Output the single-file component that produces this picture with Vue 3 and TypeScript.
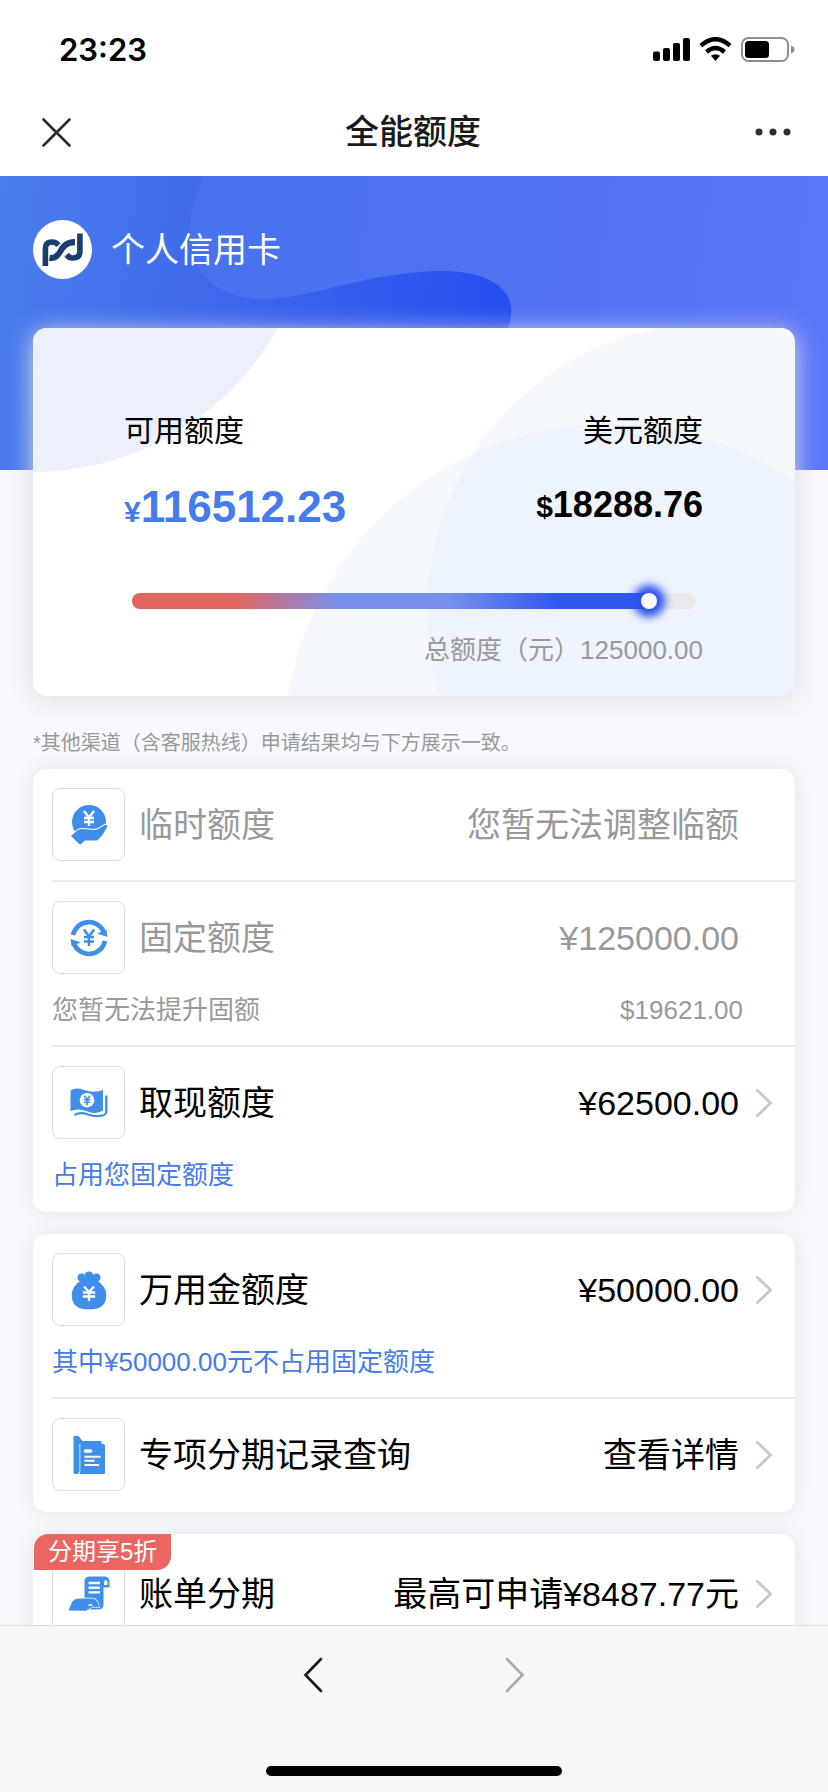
<script setup lang="ts">
import { computed } from 'vue'

type IconName = 'hand' | 'cycle' | 'cash' | 'bag' | 'folder' | 'scroll'

interface Row {
  icon: IconName
  title: string
  value: string
  note?: string
  extra?: string
  link?: boolean
  tag?: string
}

const groups: Row[][] = [
  [
    { icon: 'hand', title: '临时额度', value: '您暂无法调整临额' },
    { icon: 'cycle', title: '固定额度', value: '¥125000.00', note: '您暂无法提升固额', extra: '$19621.00' },
    { icon: 'cash', title: '取现额度', value: '¥62500.00', note: '占用您固定额度', link: true },
  ],
  [
    { icon: 'bag', title: '万用金额度', value: '¥50000.00', note: '其中¥50000.00元不占用固定额度', link: true },
    { icon: 'folder', title: '专项分期记录查询', value: '查看详情', link: true },
  ],
  [{ icon: 'scroll', title: '账单分期', value: '最高可申请¥8487.77元', link: true, tag: '分期享5折' }],
]

const percent = 92
const fillStyle = computed(() => ({ width: `${percent}%` }))
</script>

<template>
  <div class="page">
    <header class="top">
      <div class="status">
        <span class="clock">23:23</span>
        <svg class="signals" width="142" height="26" viewBox="0 0 142 26" aria-hidden="true">
          <rect x="0" y="14.500" width="7" height="9.500" rx="2" />
          <rect x="10" y="11" width="7" height="13" rx="2" />
          <rect x="20" y="6" width="7" height="18" rx="2" />
          <rect x="30" y="1" width="7" height="23" rx="2" />
          <g fill="none" stroke="#000" stroke-width="4.400">
            <path d="M48 8.600Q62.500 -4.200 77 8.600" />
            <path d="M53.500 15Q62.500 7 71.500 15" />
          </g>
          <path d="M58 18.800Q62.500 15.500 67 18.800L62.500 24Z" />
          <rect x="89" y="1" width="46" height="23" rx="6.500" fill="none" stroke="#8e8e8e" stroke-width="2" />
          <rect x="92" y="4" width="24" height="17" rx="3.500" />
          <path d="M138 8.500Q141.500 10 141.500 12.500T138 16.500Z" fill="#8e8e8e" />
        </svg>
      </div>
      <div class="titlebar">
        <button class="iconbtn" aria-label="关闭">
          <svg width="29" height="29" viewBox="0 0 29 29"><path d="M1.500 1.500L27.500 27.500M27.500 1.500L1.500 27.500" stroke="#2b2b2b" stroke-width="2.600" stroke-linecap="round" /></svg>
        </button>
        <h1>全能额度</h1>
        <button class="iconbtn" aria-label="更多">
          <svg width="36" height="8" viewBox="0 0 36 8" fill="#303030"><circle cx="4" cy="4" r="3.500" /><circle cx="18" cy="4" r="3.500" /><circle cx="32" cy="4" r="3.500" /></svg>
        </button>
      </div>
    </header>

    <main class="content">
      <section class="hero">
        <svg class="hero-bg" viewBox="0 0 828 294" preserveAspectRatio="none" aria-hidden="true">
          <defs>
            <linearGradient id="base" gradientUnits="userSpaceOnUse" x1="0" y1="0" x2="512" y2="60">
              <stop offset="0" stop-color="#4a7eec" />
              <stop offset=".4" stop-color="#406bec" />
              <stop offset="1" stop-color="#264ef0" />
            </linearGradient>
            <linearGradient id="wave" gradientUnits="userSpaceOnUse" x1="180" y1="60" x2="828" y2="150">
              <stop offset="0" stop-color="#4872ee" />
              <stop offset=".55" stop-color="#5073f3" />
              <stop offset="1" stop-color="#5c77f8" />
            </linearGradient>
          </defs>
          <rect width="828" height="294" fill="url(#base)" />
          <path d="M205 0C178 45 180 122 264 123C310 123 370 95 443 95C496 95 524 120 506 156L470 294H828V0Z" fill="url(#wave)" />
        </svg>
        <div class="owner">
          <svg width="59" height="59" viewBox="0 0 59 59" aria-hidden="true">
            <circle cx="29.500" cy="29.500" r="29.500" fill="#fff" />
            <g fill="none" stroke="#1a3d6e">
              <path d="M12.400 46V28.500Q12.400 22 19 22Q23.500 22 25.500 25.500" stroke-width="5.600" />
              <path d="M16.500 37.800C29 40 25 22 42 22.200" stroke-width="6.200" />
              <path d="M46.900 13.500V31.500Q46.900 38 40 38Q35.500 38 33.500 34.500" stroke-width="5.600" />
            </g>
            <path d="M26.800 23.500Q25.500 29 22.800 32.500M32.400 36.500Q33.500 31 36.300 27.500" fill="none" stroke="#fff" stroke-width="0.800" />
          </svg>
          <h2>个人信用卡</h2>
        </div>
      </section>

      <section class="summary">
        <svg class="summary-bg" viewBox="33 328 762 368" preserveAspectRatio="none" aria-hidden="true">
          <circle cx="33" cy="192" r="280" fill="#ecf0fc" />
          <circle cx="715" cy="610" r="288" fill="#d2e2fa" fill-opacity=".22" />
          <circle cx="609" cy="750" r="326" fill="#d2e2fa" fill-opacity=".22" />
        </svg>
        <div class="figures">
          <div class="figure">
            <span class="label">可用额度</span>
            <strong class="cny"><small>¥</small>116512.23</strong>
          </div>
          <div class="figure end">
            <span class="label">美元额度</span>
            <strong class="usd"><small>$</small>18288.76</strong>
          </div>
        </div>
        <div class="track" role="progressbar" aria-label="可用额度" :aria-valuenow="percent">
          <div class="fill" :style="fillStyle"><i class="knob"></i></div>
        </div>
        <p class="total">总额度（元）125000.00</p>
      </section>

      <p class="hint">*其他渠道（含客服热线）申请结果均与下方展示一致。</p>

      <section v-for="(group, g) in groups" :key="g" class="card">
        <component
          :is="row.link ? 'a' : 'div'"
          v-for="row in group"
          :key="row.title"
          class="row"
          :class="{ muted: !row.link, tagged: row.tag }"
          :href="row.link ? '#' : undefined"
        >
          <span v-if="row.tag" class="tag">{{ row.tag }}</span>
          <div class="line">
            <span class="iconbox">
              <svg width="40" height="40" viewBox="0 0 40 40" fill="#3f8fea" aria-hidden="true">
                <template v-if="row.icon === 'hand'">
                  <circle cx="20" cy="17" r="17" />
                  <path d="M2 31L9 25Q12 23.500 20 24.500Q26 25.500 29 24L36 20Q39.500 19.300 37.500 23Q34 30.500 28 35.500H16L11 39.800Z" stroke="#fff" stroke-width="2" paint-order="stroke" />
                  <path d="M15 6L20 12.500L25 6M20 12V21M15 13H25M15 17H25" fill="none" stroke="#fff" stroke-width="2.400" />
                </template>
                <template v-else-if="row.icon === 'cycle'">
                  <path d="M4 17A16.300 16.300 0 0 1 35.500 15.500M36 23A16.300 16.300 0 0 1 4.500 24.500" fill="none" stroke="#3f8fea" stroke-width="4.600" />
                  <path d="M28 15.500L38.500 19L37.500 12ZM12 24.500L1.500 21L2.500 28Z" />
                  <path d="M15 11.500L20 18.500L25 11.500M20 18V28M15 19H25M15 23.500H25" fill="none" stroke="#3f8fea" stroke-width="2.600" />
                </template>
                <template v-else-if="row.icon === 'cash'">
                  <path d="M1.500 7.500Q7 4 15 7Q25 10.500 34 7V27.500Q27 32 17 28Q9 25 1.500 28Z" />
                  <path d="M37.300 12.500V29Q37.300 31 35 32Q28 34.500 19 31.500Q11 28.500 5.500 32" fill="none" stroke="#3f8fea" stroke-width="2.300" />
                  <circle cx="18" cy="17.200" r="7.300" fill="#fff" />
                  <path d="M15 12.800L18 16.600L21 12.800M18 16V22.500M14.800 16.800H21.200M14.800 19.300H21.200" fill="none" stroke="#3f8fea" stroke-width="1.600" />
                </template>
                <template v-else-if="row.icon === 'bag'">
                  <circle cx="12.500" cy="7.500" r="4" />
                  <circle cx="20" cy="5.500" r="4" />
                  <circle cx="27.500" cy="7.500" r="4" />
                  <rect x="12" y="6" width="16" height="8" />
                  <path d="M12 10.500H28Q37 16 37.300 25Q37 38.500 24 39.200H16Q3 38.500 2.700 25Q3 16 12 10.500Z" />
                  <path d="M15 16.500L20 22L25 16.500M20 22V31M13.800 22.500H26.200M13.800 26.500H26.200" fill="none" stroke="#fff" stroke-width="2.300" />
                </template>
                <template v-else-if="row.icon === 'folder'">
                  <path d="M4.500 2Q4.500 1 5.500 1H9.500L13.500 6H32.500V9H10.500V36.500L9 39H6Q4.500 39 4.500 37.500Z" />
                  <path d="M11.300 9H34.500Q36 9 36 10.500V37.500Q36 39 34.500 39H10.100L11.300 37Z" />
                  <path d="M16.500 16H21.500" fill="none" stroke="#fff" stroke-width="3.600" stroke-linecap="round" />
                  <path d="M15.500 21.700H31.500M15.500 25.800H25.500M15.500 30H30" fill="none" stroke="#fff" stroke-width="2" />
                </template>
                <template v-else>
                  <path d="M20 2.500H36Q40.500 3 40.500 8V13.500H34.500V31Q34 35.500 29.500 35.500H14V24H15.500V7Q15.500 3 20 2.500Z" />
                  <path d="M19.500 9H31M19.500 13.700H31M19.500 18.400H31" stroke="#fff" stroke-width="2.400" />
                  <path d="M35 11V8Q35.300 6 37 6Q38.500 6.500 38.500 8V11Z" fill="#fff" />
                  <path d="M-.5 36.500L3 28Q5.500 24.500 10 24.500H23Q29.500 25 30 33.500L24 32.500L17 36.800Z" stroke="#fff" stroke-width="1.400" paint-order="stroke" />
                  <path d="M18.500 32Q21 28.500 24 31.500Z" fill="#fff" />
                </template>
              </svg>
            </span>
            <span class="name">{{ row.title }}</span>
            <span class="value">{{ row.value }}</span>
            <span class="arrow">
              <svg v-if="row.link" width="18" height="30" viewBox="0 0 18 30" aria-hidden="true"><path d="M1.500 1.500L15.500 15L1.500 28.500" fill="none" stroke="#c7c7cc" stroke-width="2.800" /></svg>
            </span>
          </div>
          <div v-if="row.note" class="sub">
            <span>{{ row.note }}</span>
            <span v-if="row.extra">{{ row.extra }}</span>
          </div>
        </component>
      </section>
    </main>

    <footer class="bottom">
      <nav>
        <button class="iconbtn" aria-label="后退">
          <svg width="20" height="36" viewBox="0 0 20 36"><path d="M18 2L2.500 18L18 34" fill="none" stroke="#161616" stroke-width="2.600" stroke-linecap="round" /></svg>
        </button>
        <button class="iconbtn" aria-label="前进" disabled>
          <svg width="20" height="36" viewBox="0 0 20 36"><path d="M2 2L17.500 18L2 34" fill="none" stroke="#a9a9a9" stroke-width="2.600" stroke-linecap="round" /></svg>
        </button>
      </nav>
      <div class="homebar"></div>
    </footer>
  </div>
</template>

<style>
body {
  margin: 0;
}
</style>

<style scoped>
.page {
  display: flex;
  flex-direction: column;
  height: 100vh;
  overflow: hidden;
  background: #f7f9fe;
  color: #000;
  font-family: "Liberation Sans", "Noto Sans CJK SC", sans-serif;
  font-weight: 400;
}
.page * {
  box-sizing: border-box;
}
h1,
h2,
p {
  margin: 0;
}
.top {
  flex: none;
  background: #fff;
}
.status {
  display: flex;
  align-items: center;
  justify-content: space-between;
  height: 88px;
  padding: 11px 33px 0 59px;
}
.clock {
  font-family: Inter, sans-serif;
  font-size: 31px;
  font-weight: 600;
}
.titlebar {
  display: flex;
  align-items: center;
  justify-content: space-between;
  height: 88px;
  padding: 0 37px 0 42px;
}
.titlebar h1 {
  color: #1a1a1a;
  font-size: 34px;
  font-weight: 500;
  line-height: 44px;
}
.iconbtn {
  display: flex;
  padding: 0;
  border: 0;
  background: none;
}
.content {
  flex: 1;
  min-height: 0;
  overflow: hidden;
}
.hero {
  position: relative;
  height: 294px;
  padding: 44px 33px;
}
.hero-bg,
.summary-bg {
  position: absolute;
  inset: 0;
  width: 100%;
  height: 100%;
}
.owner {
  position: relative;
  display: flex;
  align-items: center;
  gap: 19px;
}
.owner h2 {
  color: #fff;
  font-size: 34px;
  font-weight: 400;
  line-height: 44px;
}
.summary {
  position: relative;
  height: 368px;
  margin: -142px 33px 0;
  padding: 81px 92px 0 91px;
  border-radius: 14px;
  background: #fff;
  box-shadow: 0 4px 24px #dcdde3;
}
.summary-bg {
  border-radius: 14px;
}
.figures {
  position: relative;
  display: flex;
  justify-content: space-between;
}
.figure {
  display: flex;
  flex-direction: column;
  gap: 29px;
}
.end {
  align-items: flex-end;
}
.label {
  font-size: 30px;
  line-height: 44px;
}
.figure strong {
  font-weight: 700;
  line-height: 50px;
}
.cny {
  color: #467bec;
  font-size: 44px;
}
.cny small {
  font-size: 30px;
}
.figure .usd {
  font-size: 36px;
  line-height: 46px;
}
.usd small {
  font-size: 30px;
}
.track {
  position: relative;
  height: 16px;
  margin: 56px 7px 0 8px;
  border-radius: 8px;
  background: #e9e9ea;
}
.fill {
  position: relative;
  height: 100%;
  border-radius: 8px;
  background: linear-gradient(90deg, #e26660 20%, #7790ee 40%, #7790ee 61%, #3158ed 82%);
}
.knob {
  position: absolute;
  top: 0;
  right: -6px;
  width: 16px;
  height: 16px;
  border-radius: 50%;
  background: #fff;
  box-shadow: 0 0 8px 8px #2b50ee;
}
.total {
  position: relative;
  margin-top: 22px;
  color: #999;
  font-size: 26px;
  line-height: 38px;
  text-align: right;
}
.hint {
  margin: 32px 33px 0;
  padding-bottom: 11px;
  color: #999;
  font-size: 20px;
  line-height: 30px;
}
.card {
  margin: 0 33px 22px;
  border-radius: 14px;
  background: #fff;
  box-shadow: 0 0 18px #e4e5ec;
}
.row {
  position: relative;
  display: block;
  margin-left: 19px;
  padding-top: 19px;
  border-bottom: 2px solid #ebebed;
  color: #000;
  text-decoration: none;
}
.row:last-child {
  border-color: transparent;
}
.muted {
  color: #999;
}
.tagged {
  padding-top: 23px;
}
.line {
  display: flex;
  align-items: center;
  padding-bottom: 19px;
}
.iconbox {
  display: flex;
  flex: none;
  align-items: center;
  justify-content: center;
  width: 73px;
  height: 73px;
  margin-right: 14px;
  border: 1px solid #dcdcdc;
  border-radius: 8px;
}
.iconbox svg {
  overflow: visible;
}
.name,
.value {
  font-size: 34px;
  line-height: 44px;
}
.value {
  margin-left: auto;
}
.arrow {
  display: flex;
  width: 40px;
  margin-left: 16px;
}
.sub {
  display: flex;
  justify-content: space-between;
  margin-right: 52px;
  padding-bottom: 18px;
  color: #999;
  font-size: 26px;
  line-height: 34px;
}
a .sub {
  color: #467bec;
}
.tag {
  position: absolute;
  top: 0;
  left: -18px;
  padding: 0 14px;
  border-radius: 14px 0 14px 0;
  background: #ec6661;
  color: #fff;
  font-size: 24px;
  line-height: 36px;
}
.bottom {
  position: relative;
  display: flex;
  flex: none;
  flex-direction: column;
  align-items: center;
  justify-content: space-between;
  height: 167px;
  padding: 31px 0 16px;
  border-top: 1px solid #dcdcdf;
  background: #f7f7f7;
}
.bottom nav {
  display: flex;
  gap: 182px;
}
.homebar {
  width: 296px;
  height: 10px;
  border-radius: 5px;
  background: #000;
}
</style>
